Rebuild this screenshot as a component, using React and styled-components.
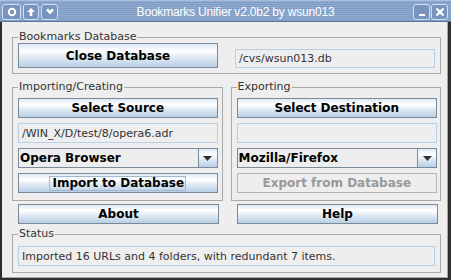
import React from "react";
import styled, { createGlobalStyle } from "styled-components";

const GlobalStyle = createGlobalStyle`
  html, body {
    margin: 0;
    padding: 0;
    background: #eeeeee;
  }
  body {
    font-family: "DejaVu Sans", sans-serif;
    color: #333333;
  }
`;

const Window = styled.div`
  width: 451px;
  height: 280px;
  display: flex;
  flex-direction: column;
  background: #eeeeee;
  overflow: hidden;
`;

// title bar with the stripy blue look
const TitleBar = styled.div`
  height: 22px;
  flex: none;
  display: flex;
  align-items: flex-start;
  padding: 4px 3px 0 2px;
  box-sizing: border-box;
  background: repeating-linear-gradient(
    to bottom,
    #8eaad0 0px,
    #8eaad0 1px,
    #7f9cc4 1px,
    #7f9cc4 2px
  );
  border-top: 1px solid #a9c0dd;
  border-bottom: 1px solid #5c769c;
`;

const ButtonGroup = styled.div`
  display: flex;
  gap: ${(p) => p.gap || 2}px;
  margin-top: -1px;
`;

const TitleButton = styled.div`
  width: ${(p) => p.w || 17}px;
  height: 16px;
  box-sizing: border-box;
  border: 1px solid #d4e0ef;
  border-radius: 3px;
  background: #7894be;
  display: flex;
  align-items: center;
  justify-content: center;
`;

const Title = styled.div`
  flex: 1;
  text-align: center;
  color: #ffffff;
  font-family: "Liberation Sans", sans-serif;
  font-size: 12px;
  line-height: 15px;
  letter-spacing: -0.2px;
`;

const Frame = styled.div`
  flex: 1;
  display: flex;
  flex-direction: column;
  padding: 9px 7px 0 10px;
  border-left: 2px solid #2e2e2e;
  border-right: 3px solid #2e2e2e;
  border-bottom: 2px solid #2e2e2e;
  box-shadow: inset -1px -1px 0 #a8a8a8;
  box-sizing: border-box;
`;

const Group = styled.fieldset`
  margin: ${(p) => p.mt || 0}px 0 0 0;
  padding: ${(p) => p.pt || 0}px ${(p) => p.pr || 5}px ${(p) => p.pb || 5}px 5px;
  border: 1px solid #a9a9a9;
  min-width: 0;
  box-sizing: border-box;
`;

const Legend = styled.legend`
  padding: 0 1px;
  margin-left: 0;
  font-size: 11px;
  line-height: 12px;
  color: #333333;
`;

const TwoCols = styled.div`
  display: grid;
  grid-template-columns: 1fr 1fr;
  column-gap: ${(p) => p.gap}px;
  align-items: end;
  margin-top: ${(p) => p.mt || 0}px;
  padding-left: ${(p) => p.pl || 0}px;
  width: ${(p) => p.w || "auto"};
`;

const Stack = styled.div`
  display: flex;
  flex-direction: column;
  gap: 5px;
`;

const Button = styled.button`
  height: ${(p) => p.h || 20}px;
  margin: 0;
  padding: 0;
  box-sizing: border-box;
  border: 1px solid #7a8a99;
  background: linear-gradient(
    to bottom,
    #dde8f3 0%,
    #ffffff 30%,
    #dde8f3 60%,
    #b8cfe5 100%
  );
  font-family: "DejaVu Sans", sans-serif;
  font-weight: bold;
  font-size: 12px;
  color: #000000;
  display: flex;
  align-items: center;
  justify-content: center;

  &:disabled {
    border-color: #b5b5b5;
    background: #eeeeee;
    color: #999999;
  }
`;

const FocusRing = styled.span`
  border: 1px solid #a3b8cc;
  padding: 0 1px 0 2px;
  line-height: 13px;
`;

const Field = styled.div`
  height: ${(p) => p.h || 20}px;
  box-sizing: border-box;
  border: 1px solid #b8cfe5;
  background: #eeeeee;
  padding: 0 3px;
  font-size: 11px;
  color: #333333;
  display: flex;
  align-items: center;
  white-space: nowrap;
  overflow: hidden;
`;

const Combo = styled.div`
  height: 20px;
  box-sizing: border-box;
  border: 1px solid #7a8a99;
  display: flex;
  background: #eeeeee;
`;

const ComboValue = styled.div`
  flex: 1;
  padding-left: 1px;
  font-weight: bold;
  font-size: 12px;
  color: #000000;
  display: flex;
  align-items: center;
  border-right: 1px solid #7a8a99;
`;

const ComboArrow = styled.div`
  width: 18px;
  display: flex;
  align-items: center;
  justify-content: center;
  background: linear-gradient(
    to bottom,
    #dde8f3 0%,
    #ffffff 30%,
    #dde8f3 60%,
    #b8cfe5 100%
  );
`;

const Arrow = () => (
  <svg width="9" height="5" viewBox="0 0 9 5">
    <path d="M0 0 H9 L4.5 5 Z" fill="#333" />
  </svg>
);

const Dropdown = ({ value }) => (
  <Combo>
    <ComboValue>{value}</ComboValue>
    <ComboArrow>
      <Arrow />
    </ComboArrow>
  </Combo>
);

export default function App() {
  return (
    <>
      <GlobalStyle />
      <Window>
        <TitleBar>
          <ButtonGroup gap={2}>
            <TitleButton w={19}>
              <svg width="10" height="10" viewBox="0 0 10 10">
                <circle cx="5" cy="5" r="3.2" fill="none" stroke="#fff" strokeWidth="2" />
              </svg>
            </TitleButton>
            <TitleButton w={16}>
              <svg width="10" height="10" viewBox="0 0 10 10">
                <path d="M5 1 L9 5 L6.3 5 L6.3 9 L3.7 9 L3.7 5 L1 5 Z" fill="#fff" />
              </svg>
            </TitleButton>
            <TitleButton w={17}>
              <svg width="10" height="10" viewBox="0 0 10 10">
                <path d="M1 3 L3 1.5 L5 3.5 L7 1.5 L9 3 L5 7.5 Z" fill="#fff" />
              </svg>
            </TitleButton>
          </ButtonGroup>
          <Title>Bookmarks Unifier v2.0b2 by wsun013</Title>
          <ButtonGroup gap={1}>
            <TitleButton w={17}>
              <svg width="10" height="10" viewBox="0 0 10 10">
                <rect x="2" y="7" width="6" height="2" fill="#fff" />
              </svg>
            </TitleButton>
            <TitleButton w={17}>
              <svg width="10" height="10" viewBox="0 0 10 10">
                <path d="M1.5 1.5 L8.5 8.5 M8.5 1.5 L1.5 8.5" stroke="#fff" strokeWidth="2.2" />
              </svg>
            </TitleButton>
          </ButtonGroup>
        </TitleBar>

        <Frame>
          <Group pt={0} pb={5}>
            <Legend>Bookmarks Database</Legend>
            <TwoCols gap={17}>
              <Button h={25}>Close Database</Button>
              <Field h={19}>/cvs/wsun013.db</Field>
            </TwoCols>
          </Group>

          <TwoCols gap={8} mt={7}>
            <Group pt={5} pb={7} pr={4}>
              <Legend>Importing/Creating</Legend>
              <Stack>
                <Button>Select Source</Button>
                <Field>/WIN_X/D/test/8/opera6.adr</Field>
                <Dropdown value="Opera Browser" />
                <Button>
                  <FocusRing>Import to Database</FocusRing>
                </Button>
              </Stack>
            </Group>
            <Group pt={5} pb={7} pr={3}>
              <Legend>Exporting</Legend>
              <Stack>
                <Button>Select Destination</Button>
                <Field />
                <Dropdown value="Mozilla/Firefox" />
                <Button disabled>Export from Database</Button>
              </Stack>
            </Group>
          </TwoCols>

          <TwoCols gap={18} mt={3} pl={6} w="420px">
            <Button>About</Button>
            <Button>Help</Button>
          </TwoCols>

          <Group mt={4} pt={6} pb={6}>
            <Legend>Status</Legend>
            <Field>Imported 16 URLs and 4 folders, with redundant 7 items.</Field>
          </Group>
        </Frame>
      </Window>
    </>
  );
}
